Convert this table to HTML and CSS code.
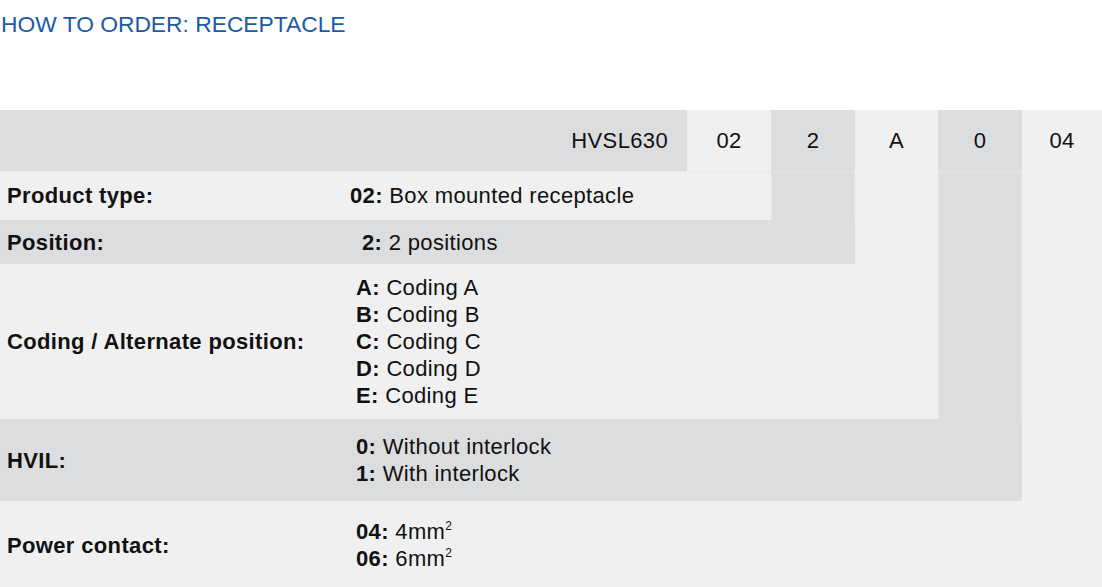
FILE: index.html
```html
<!DOCTYPE html>
<html lang="en">
<head>
<meta charset="utf-8">
<title>How to order: Receptacle</title>
<link rel="stylesheet" href="styles.css">
</head>
<body>
<div class="page">
  <h1 class="title">HOW TO ORDER: RECEPTACLE</h1>
  <div class="order">
    <div class="cell dark head code">HVSL630</div>
    <div class="cell light head h-02">02</div>
    <div class="cell dark head h-2">2</div>
    <div class="cell light head h-a">A</div>
    <div class="cell dark head h-0">0</div>
    <div class="cell light head h-04">04</div>

    <div class="tail dark t-2"></div>
    <div class="tail light t-a"></div>
    <div class="tail dark t-0"></div>
    <div class="tail light t-04"></div>

    <div class="cell light label r-product">Product type:</div>
    <div class="cell light value v-product"><div><b>02:</b> Box mounted receptacle</div></div>

    <div class="cell dark label r-position">Position:</div>
    <div class="cell dark value v-position"><div><b>2:</b> 2 positions</div></div>

    <div class="cell light label r-coding">Coding / Alternate position:</div>
    <div class="cell light value v-coding">
      <div><b>A:</b> Coding A</div>
      <div><b>B:</b> Coding B</div>
      <div><b>C:</b> Coding C</div>
      <div><b>D:</b> Coding D</div>
      <div><b>E:</b> Coding E</div>
    </div>

    <div class="cell dark label r-hvil">HVIL:</div>
    <div class="cell dark value v-hvil">
      <div><b>0:</b> Without interlock</div>
      <div><b>1:</b> With interlock</div>
    </div>

    <div class="cell light label r-power">Power contact:</div>
    <div class="cell light value v-power">
      <div><b>04:</b> 4mm<sup>2</sup></div>
      <div><b>06:</b> 6mm<sup>2</sup></div>
    </div>
  </div>
</div>
</body>
</html>
```

FILE: styles.css
```css
html, body {
  margin: 0;
  padding: 0;
  background: #ffffff;
}

.page {
  font-family: "Liberation Sans", Arial, Helvetica, sans-serif;
  color: #111111;
  padding-top: 11px;
}

.title {
  margin: 0 0 0 1px;
  font-size: 22.8px;
  line-height: 26px;
  font-weight: normal;
  color: #1a5aa8;
}

.order {
  margin-top: 73px;
  display: grid;
  grid-template-columns: 340px 347px 84px 84px 83px 84px 1fr;
  grid-template-rows: 61px 49px 44px 155px 82px 88px;
  font-size: 22px;
  letter-spacing: 0.35px;
  line-height: 27px;
}

.dark { background: #dcdddf; }
.light { background: #f0f0f0; }

.cell {
  display: flex;
  align-items: center;
  box-sizing: border-box;
}

.head {
  justify-content: center;
  grid-row: 1;
}

.code {
  grid-column: 1 / 3;
  justify-content: flex-end;
  padding-right: 19px;
}
.h-02 { grid-column: 3; }
.h-2 { grid-column: 4; }
.h-a { grid-column: 5; }
.h-0 { grid-column: 6; }
.h-04 { grid-column: 7; }

.tail { box-sizing: border-box; }
.tail.dark {
  box-shadow: inset 0 1px 0 #e4e5e6, inset 1px 0 0 #e4e5e6, inset -1px 0 0 #e4e5e6;
}
.t-2 { grid-column: 4; grid-row: 2; }
.t-a { grid-column: 5; grid-row: 2 / 4; }
.t-0 { grid-column: 6; grid-row: 2 / 5; }
.t-04 { grid-column: 7; grid-row: 2 / 6; }

.label {
  grid-column: 1;
  padding-left: 7px;
  font-weight: bold;
}

.value {
  flex-direction: column;
  align-items: flex-start;
  justify-content: center;
  padding-left: 16px;
}

.value b { font-weight: bold; }

.value sup {
  font-size: 12px;
  line-height: 0;
  letter-spacing: 0;
  vertical-align: 9px;
}

.r-product { grid-row: 2; box-shadow: inset 0 1px 0 #e9e9ea; }
.v-product { grid-row: 2; grid-column: 2 / 4; padding-left: 10px; box-shadow: inset 0 1px 0 #e9e9ea; }

.r-position { grid-row: 3; }
.v-position { grid-row: 3; grid-column: 2 / 5; padding-left: 22px; }

.r-coding { grid-row: 4; }
.v-coding { grid-row: 4; grid-column: 2 / 6; }

.r-hvil { grid-row: 5; }
.v-hvil { grid-row: 5; grid-column: 2 / 7; }

.r-power { grid-row: 6; }
.v-power { grid-row: 6; grid-column: 2 / 8; }
```
